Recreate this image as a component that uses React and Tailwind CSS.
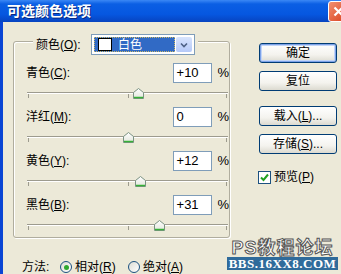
import React from "react";

const FONT = "font-['Liberation_Sans','Noto_Sans_CJK_SC',sans-serif]";

function Thumb() {
  return (
    <svg width="11" height="11" viewBox="0 0 11 11">
      <defs>
        <linearGradient id="tg" x1="0" y1="0" x2="0" y2="1">
          <stop offset="0" stopColor="#ffffff" />
          <stop offset="1" stopColor="#e2e6dc" />
        </linearGradient>
      </defs>
      <path d="M0.5 10.5 V4.5 L5.5 0.5 L10.5 4.5 V10.5 Z" fill="url(#tg)" stroke="#7b9283" />
      <path d="M1 9.5 H10" stroke="#37b037" strokeWidth="1.5" />
    </svg>
  );
}

function Slider({ value }) {
  return (
    <div className="relative ml-[1px] h-[24px] w-[201px]">
      <div className="absolute left-0 right-0 top-[9px] h-[2px] border-t border-b border-t-[#9d9b8e] border-b-white" />
      <div className="absolute left-[1px] top-[11px] h-[4px] w-[1px] bg-[#9d9b8e]" />
      <div className="absolute left-[101px] top-[11px] h-[4px] w-[1px] bg-[#9d9b8e]" />
      <div className="absolute left-[199px] top-[11px] h-[4px] w-[1px] bg-[#9d9b8e]" />
      <div className="absolute top-[5px]" style={{ left: 96 + value }}>
        <Thumb />
      </div>
    </div>
  );
}

function Row({ name, key1, value, num }) {
  return (
    <div className="flex h-[44px] flex-col">
      <div className="flex h-[20px] items-center">
        <div className="w-[147px] text-[12px] text-black">
          {name}(<span className="underline">{key1}</span>):
        </div>
        <div className="flex h-[20px] w-[40px] items-center border border-[#7f9db9] bg-white pl-[3px] text-[13px] text-black">
          {value}
        </div>
        <div className="ml-[5px] text-[13px] text-black">%</div>
      </div>
      <Slider value={num} />
    </div>
  );
}

function Btn({ children, def }) {
  return (
    <div
      className={
        "flex h-[20px] w-[78px] items-center justify-center rounded-[3px] border border-[#003c74] bg-[linear-gradient(to_bottom,#ffffff_0%,#f4f3ee_60%,#dcdad0_100%)] text-[12px] text-black " +
        (def ? "shadow-[inset_0_0_0_1px_#7da2e8,inset_0_0_0_2px_#c2d5f7]" : "")
      }
    >
      {children}
    </div>
  );
}

function Radio({ checked }) {
  return (
    <div className="flex h-[12px] w-[12px] items-center justify-center rounded-full border border-[#1c5180] bg-[linear-gradient(135deg,#dcdcd4,#ffffff)]">
      {checked && <div className="h-[5px] w-[5px] rounded-full bg-[#2fa82f]" />}
    </div>
  );
}

export default function App() {
  return (
    <div className={"relative h-[274px] w-[341px] overflow-hidden bg-[#ece9d8] " + FONT}>
      {/* Title bar */}
      <div className="flex h-[22px] items-center justify-between bg-[linear-gradient(to_bottom,#3b88f5_0%,#0b5fe4_18%,#0657e0_65%,#0744c0_100%)]">
        <div className="pl-[7px] text-[14px] font-bold leading-none text-white [text-shadow:1px_1px_0_#0a2a80]">
          可选颜色选项
        </div>
        <div className="mr-[-8px] flex h-[21px] w-[21px] shrink-0 items-center justify-center rounded-[3px] border border-white bg-[linear-gradient(135deg,#f19070,#d9401c)]">
          <svg width="11" height="11" viewBox="0 0 11 11">
            <path d="M1.5 1.5 L9.5 9.5 M9.5 1.5 L1.5 9.5" stroke="#ffffff" strokeWidth="2.2" />
          </svg>
        </div>
      </div>

      {/* Body */}
      <div className="flex h-[252px] border-l-[3px] border-l-[#0a45d4]">
        {/* Left column */}
        <div className="ml-[10px] flex flex-col pt-[19px]">
          <div className="flex h-[197px] w-[217px] flex-col rounded-[3px] border border-[#b0ad9e] shadow-[inset_1px_1px_0_#ffffff,1px_1px_0_#ffffff]">
            <div className="-mt-[8px] ml-[19px] flex h-[21px] items-center self-start bg-[#ece9d8] pl-[3px] pr-[3px]">
              <div className="w-[55px] text-[12px] text-black">
                颜色(<span className="underline">O</span>):
              </div>
              <div className="flex h-[21px] w-[104px] items-center border border-[#7f9db9] bg-white p-[2px]">
                <div className="flex h-full flex-1 items-center border border-dotted border-[#c9b86a] bg-[#316ac5]">
                  <div className="ml-[3px] h-[13px] w-[14px] border border-black bg-white" />
                  <div className="ml-[6px] text-[12px] text-white">白色</div>
                </div>
                <div className="ml-[1px] flex h-full w-[16px] items-center justify-center rounded-[2px] bg-[linear-gradient(to_bottom,#d8e4fd,#b5c9f8)]">
                  <svg width="8" height="6" viewBox="0 0 8 6">
                    <path d="M1 1.5 L4 4.5 L7 1.5" fill="none" stroke="#4d6185" strokeWidth="1.6" />
                  </svg>
                </div>
              </div>
            </div>
            <div className="mt-[8px] flex flex-col pl-[12px]">
              <Row name="青色" key1="C" value="+10" num={10} />
              <Row name="洋红" key1="M" value="0" num={0} />
              <Row name="黄色" key1="Y" value="+12" num={12} />
              <Row name="黑色" key1="B" value="+31" num={31} />
            </div>
          </div>
          <div className="mt-[23px] flex h-[12px] items-center text-[12px] text-black">
            <div className="ml-[9px] w-[38px]">方法:</div>
            <Radio checked />
            <div className="ml-[3px] w-[53px]">
              相对(<span className="underline">R</span>)
            </div>
            <Radio />
            <div className="ml-[3px]">
              绝对(<span className="underline">A</span>)
            </div>
          </div>
        </div>

        {/* Right column */}
        <div className="ml-[29px] flex flex-col pt-[21px]">
          <Btn def>确定</Btn>
          <div className="h-[8px]" />
          <Btn>复位</Btn>
          <div className="h-[15px]" />
          <Btn>
            载入(<span className="underline">L</span>)...
          </Btn>
          <div className="h-[8px]" />
          <Btn>
            存储(<span className="underline">S</span>)...
          </Btn>
          <div className="mt-[14px] -ml-[1px] flex items-center text-[12px] text-black">
            <div className="flex h-[13px] w-[13px] items-center justify-center border border-[#1c5180] bg-white">
              <svg width="9" height="9" viewBox="0 0 9 9">
                <path d="M1 4.5 L3.5 7 L8 1.5" fill="none" stroke="#21a121" strokeWidth="2" />
              </svg>
            </div>
            <div className="ml-[3px]">
              预览(<span className="underline">P</span>)
            </div>
          </div>
        </div>
      </div>

      {/* Watermark */}
      <div className="absolute left-[227px] top-[239px] flex w-[111px] flex-col items-center">
        <div className="h-[18px] overflow-visible text-[18px] font-bold leading-[18px] tracking-[1px] text-white [-webkit-text-stroke:1px_#555555]">
          PS教程论坛
        </div>
        <div className="flex h-[13px] w-[111px] items-center justify-center bg-[#2f6b9b] font-['Liberation_Serif',serif] text-[13px] font-bold leading-none tracking-[0.5px] text-white">
          BBS.16XX8.COM
        </div>
      </div>
    </div>
  );
}
